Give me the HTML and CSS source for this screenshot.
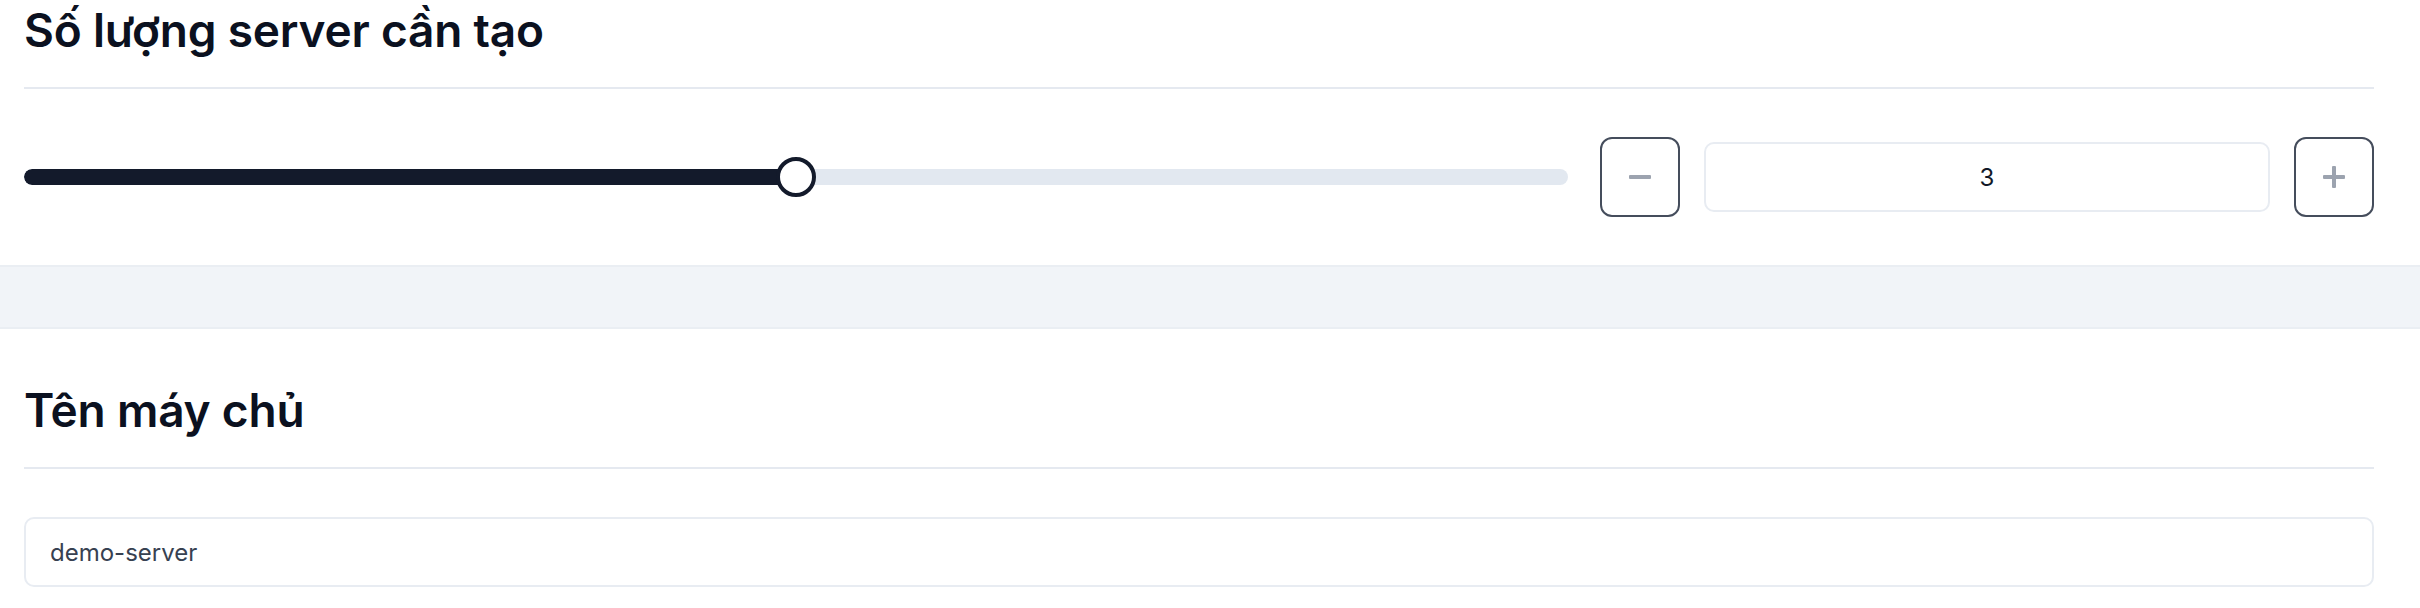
FILE: index.html
```html
<!DOCTYPE html>
<html lang="vi">
<head>
<meta charset="utf-8">
<link rel="stylesheet" href="styles.css">
</head>
<body>
  <section class="section first">
    <h2 class="title">Số lượng server cần tạo</h2>
    <div class="row">
      <div class="slider">
        <div class="track">
          <div class="fill" style="width:50%"></div>
        </div>
        <div class="thumb" style="left:calc((100% - 40px) * 0.5)"></div>
      </div>
      <button class="step" type="button" aria-label="Giảm">
        <svg width="22" height="4" viewBox="0 0 22 4"><rect x="0" y="0" width="22" height="4" rx="1" fill="#9ca3af"/></svg>
      </button>
      <input class="count" type="text" value="3">
      <button class="step" type="button" aria-label="Tăng">
        <svg width="22" height="22" viewBox="0 0 22 22"><rect x="0" y="9" width="22" height="4" rx="1" fill="#9ca3af"/><rect x="9" y="0" width="4" height="22" rx="1" fill="#9ca3af"/></svg>
      </button>
    </div>
  </section>
  <div class="band"></div>
  <section class="section second">
    <h2 class="title">Tên máy chủ</h2>
    <input class="name" type="text" value="demo-server">
  </section>
</body>
</html>
```

FILE: styles.css
```css
* { box-sizing: border-box; }
html, body { margin: 0; padding: 0; background: #ffffff; }
body {
  font-family: Inter, "Noto Sans", sans-serif;
  color: #0f172a;
  width: 2420px;
  height: 608px;
  overflow: hidden;
}
.section {
  padding: 0 46px 0 24px;
}
.first {
  padding-top: 3px;
  padding-bottom: 48px;
}
.second {
  padding-top: 54px;
}
.title {
  margin: 0;
  font-size: 46px;
  line-height: 54px;
  font-weight: 600;
  color: #0b1120;
  letter-spacing: -0.2px;
  padding-bottom: 30px;
  border-bottom: 2px solid #e5e9f0;
  margin-bottom: 48px;
}
.row {
  display: flex;
  align-items: center;
}
.slider {
  position: relative;
  flex: 1;
  height: 40px;
  display: flex;
  align-items: center;
  margin-right: 32px;
}
.track {
  width: 100%;
  height: 16px;
  border-radius: 8px;
  background: #e2e8f0;
  overflow: hidden;
}
.fill {
  height: 100%;
  background: #131a2b;
  border-radius: 8px 0 0 8px;
}
.thumb {
  position: absolute;
  top: 0;
  width: 40px;
  height: 40px;
  border-radius: 50%;
  background: #ffffff;
  border: 4px solid #131a2b;
}
.step {
  width: 80px;
  height: 80px;
  flex: none;
  border: 2px solid #454d5c;
  border-radius: 12px;
  background: #ffffff;
  display: flex;
  align-items: center;
  justify-content: center;
  padding: 0;
}
.count {
  width: 566px;
  height: 70px;
  margin: 0 24px;
  flex: none;
  border: 2px solid #e8ecf2;
  border-radius: 10px;
  text-align: center;
  font-family: Inter, "Noto Sans", sans-serif;
  font-size: 24px;
  color: #111827;
  background: #ffffff;
  outline: none;
}
.band {
  height: 64px;
  background: #f1f4f8;
  border-top: 2px solid #eaeef3;
  border-bottom: 2px solid #eaeef3;
}
.name {
  display: block;
  width: 100%;
  height: 70px;
  border: 2px solid #e8ecf2;
  border-radius: 10px;
  padding: 0 24px;
  font-family: Inter, "Noto Sans", sans-serif;
  font-size: 24px;
  color: #374151;
  background: #ffffff;
  outline: none;
}
```
